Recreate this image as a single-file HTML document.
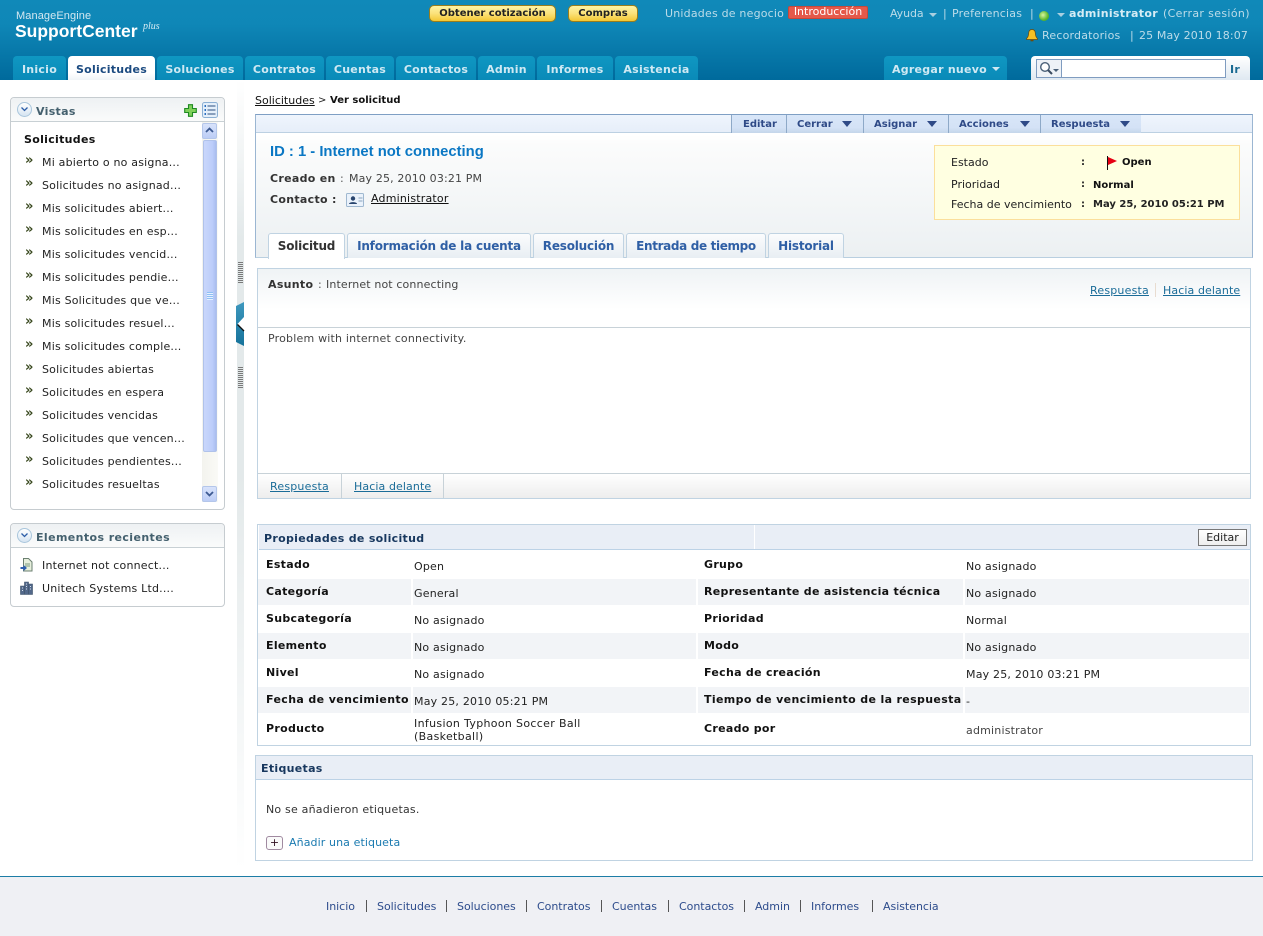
<!DOCTYPE html>
<html lang="es"><head><meta charset="utf-8"><title>SupportCenter Plus</title>
<style>
html,body{margin:0;padding:0;background:#fff;width:1263px;height:936px;overflow:hidden}
body{position:relative;font:11px/14px "DejaVu Sans","Liberation Sans",sans-serif;color:#222}
.a{position:absolute;box-sizing:border-box}
.t{position:absolute;white-space:nowrap;line-height:14px;margin-top:1px;letter-spacing:.2px}
.b{font-weight:bold;letter-spacing:.3px}
.n{letter-spacing:0}
u{text-decoration:underline}
.tab{position:absolute;top:56px;height:24px;background:linear-gradient(#0f97c2,#0a8ab8);border-radius:4px 4px 0 0;color:#cfe9f3;font-weight:bold;text-align:center;line-height:28px;white-space:nowrap;box-sizing:border-box;letter-spacing:.25px}
.tb{position:absolute;top:115px;height:18px;background:linear-gradient(#d8e6f8 0,#d4e2f6 70%,#c4d6ea 100%);border-right:1px solid #8ea9c8;color:#2f4a87;font-weight:bold;font-size:10px;line-height:19px;white-space:nowrap;box-sizing:border-box}
.tb i{position:absolute;top:6px;width:0;height:0;border-left:5px solid transparent;border-right:5px solid transparent;border-top:6px solid #2f4a87}
.st{position:absolute;top:233px;height:25px;background:linear-gradient(#fbfcfd,#e8eef3);border:1px solid #c0d3e2;border-bottom:0;border-radius:3px 3px 0 0;color:#2f5fa5;font-weight:bold;font-size:12px;line-height:24px;text-align:center;white-space:nowrap;box-sizing:border-box;letter-spacing:-.2px}
.row{position:absolute;left:258px;width:991px;height:26px;background:#f2f4f7}
.sep{position:absolute;top:550px;width:2px;height:195px;background:#fff}
.p{position:absolute;background:#fff;border:1px solid #c6ccd0;border-radius:4px;box-sizing:border-box}
.ph{position:absolute;left:0;top:0;right:0;height:24px;box-sizing:border-box;background:linear-gradient(#eef1f3,#fafbfb);border-bottom:1px solid #c8d0d4;border-radius:4px 4px 0 0}
.cir{position:absolute;left:6px;top:4px;width:15px;height:15px;border-radius:50%;background:linear-gradient(#fff,#d5e4f2);border:1px solid #a9c6dc;box-sizing:border-box}
.f{position:absolute;top:900px;height:14px;line-height:14px;color:#2d4c8c;white-space:nowrap;font-size:11px;letter-spacing:-.03px}
.fs{position:absolute;top:900px;width:1px;height:12px;background:#555}
.bt{position:absolute;top:5px;height:17px;border:1px solid #9a7d1c;border-radius:5px;background:linear-gradient(#fff3a4,#fbe27a 50%,#f4c734);color:#222;font-weight:bold;font-size:10px;line-height:15px;text-align:center;box-sizing:border-box;white-space:nowrap}
.lnk{color:#1a6c98}
.m{font-weight:bold;font-size:13px;color:#3a4a20;letter-spacing:0}
</style></head><body>

<!-- header -->
<div class="a" style="left:0;top:0;width:1263px;height:80px;background:linear-gradient(#1089b9 0,#0f87b7 30%,#006a9c 100%)"></div>
<div class="t n" style="margin:0;left:16px;top:9px;font:11px/14px 'Liberation Sans',sans-serif;letter-spacing:.1px;color:#d4e8f1">ManageEngine</div>
<div class="t n" style="margin:0;left:15px;top:21px;font:bold 17.5px/20px 'Liberation Sans',sans-serif;color:#fff">SupportCenter</div>
<div class="t n" style="margin:0;left:143px;top:21px;font:italic 10px/12px 'Liberation Serif',serif;color:#d8ecf4">plus</div>

<div class="bt" style="left:429px;width:127px">Obtener cotización</div>
<div class="bt" style="left:568px;width:70px">Compras</div>
<div class="t" style="left:665px;top:6px;color:#bcdce9">Unidades de negocio</div>
<div class="a" style="left:788px;top:6px;width:80px;height:13px;background:#e5594a;border:1px solid #c9483a;border-radius:2px;color:#fff;font-size:11px;line-height:10px;text-align:center;white-space:nowrap">Introducción</div>
<div class="t" style="left:890px;top:6px;color:#bcdce9;letter-spacing:-.1px">Ayuda</div>
<div class="a" style="left:929px;top:13px;width:0;height:0;border-left:4px solid transparent;border-right:4px solid transparent;border-top:4px solid #a9cfe0"></div>
<div class="t" style="left:943px;top:6px;color:#bcdce9">|</div>
<div class="t" style="left:952px;top:6px;color:#bcdce9">Preferencias</div>
<div class="t" style="left:1030px;top:6px;color:#bcdce9">|</div>
<div class="a" style="left:1039px;top:11px;width:10px;height:10px;border-radius:50%;background:radial-gradient(circle at 40% 40%,#d8f5a0,#5cb82c 60%,#3f9a20)"></div>
<div class="a" style="left:1057px;top:13px;width:0;height:0;border-left:4px solid transparent;border-right:4px solid transparent;border-top:4px solid #a9cfe0"></div>
<div class="t b" style="left:1069px;top:6px;color:#d6ecf5">administrator</div>
<div class="t" style="left:1163px;top:6px;color:#bcdce9;letter-spacing:.35px">(Cerrar sesión)</div>

<svg class="a" style="left:1026px;top:29px" width="12" height="13" viewBox="0 0 12 13"><path d="M6 0.5c-2.4 0-3.4 2-3.4 4.2 0 2.4-.9 3.6-2 4.8v1h10.8v-1c-1.1-1.2-2-2.4-2-4.8C9.4 2.500 8.400.5 6 .5z" fill="#f5c025" stroke="#6e4a08" stroke-width=".7"/><path d="M4.500 11h3v1.300h-3z" fill="#6e4a08"/></svg>
<div class="t" style="left:1042px;top:28px;color:#bcdce9">Recordatorios</div>
<div class="t" style="left:1130px;top:28px;color:#bcdce9">|</div>
<div class="t" style="left:1139px;top:28px;color:#bcdce9;letter-spacing:.12px">25 May 2010 18:07</div>

<div class="tab" style="left:13px;width:53px">Inicio</div>
<div class="tab" style="left:68px;width:87px;background:linear-gradient(#fff,#fff 70%,#f0f4f7);color:#1b4a80">Solicitudes</div>
<div class="tab" style="left:157px;width:86px">Soluciones</div>
<div class="tab" style="left:245px;width:79px">Contratos</div>
<div class="tab" style="left:326px;width:68px">Cuentas</div>
<div class="tab" style="left:396px;width:80px">Contactos</div>
<div class="tab" style="left:478px;width:57px">Admin</div>
<div class="tab" style="left:537px;width:76px">Informes</div>
<div class="tab" style="left:615px;width:83px">Asistencia</div>
<div class="tab" style="left:884px;width:123px;text-align:left;padding-left:8px">Agregar nuevo</div>
<div class="a" style="left:992px;top:67px;width:0;height:0;border-left:4px solid transparent;border-right:4px solid transparent;border-top:4px solid #cfe9f3"></div>

<div class="a" style="left:1031px;top:56px;width:219px;height:24px;background:linear-gradient(#fff,#dfe9f1);border-radius:4px 4px 0 0"></div>
<div class="a" style="left:1036px;top:59px;width:190px;height:19px;background:#fff;border:1px solid #7f9cc0"></div>
<div class="a" style="left:1037px;top:60px;width:24px;height:17px;background:#eef2f7"></div>
<div class="a" style="left:1061px;top:60px;width:1px;height:17px;background:#7f9cc0"></div>
<svg class="a" style="left:1039px;top:61px" width="22" height="15" viewBox="0 0 22 15"><circle cx="6" cy="6" r="4.300" fill="#fff" stroke="#4a6078" stroke-width="1.400"/><path d="M9 9l4 4" stroke="#3a4a60" stroke-width="2"/><path d="M14 8h6l-3 3z" fill="#4a6078"/></svg>
<div class="t b" style="left:1230px;top:62px;color:#1b6b93">Ir</div>

<!-- sidebar: views -->
<div class="p" style="left:10px;top:97px;width:215px;height:413px">
  <div class="ph"><div class="cir"></div>
  <svg class="a" style="left:9px;top:8px" width="9" height="7" viewBox="0 0 9 7"><path d="M1.500 1.500L4.500 4.500L7.500 1.500" fill="none" stroke="#2d5ea8" stroke-width="1.300"/></svg></div>
</div>
<div class="t b" style="left:36px;top:104px;color:#44606e">Vistas</div>
<svg class="a" style="left:184px;top:104px" width="13" height="13" viewBox="0 0 13 13"><path d="M4.500 .7h4v3.800h3.800v4H8.500v3.800h-4V8.500H.7v-4h3.800z" fill="#7fd05a" stroke="#1f8a22" stroke-width="1.100"/></svg>
<svg class="a" style="left:202px;top:102px" width="16" height="16" viewBox="0 0 16 16"><rect x=".5" y=".5" width="15" height="15" rx="2" fill="#e4effa" stroke="#8cb0d4"/><path d="M5.500 4h8M5.500 8h8M5.500 12h8" stroke="#2b4f80"/><path d="M2.500 3h1.500v2H2.500zM2.500 7h1.500v2H2.500zM2.500 11h1.500v2H2.500z" fill="#2b6fc0"/></svg>

<!-- scrollbar -->
<div class="a" style="left:202px;top:122px;width:16px;height:380px;background:linear-gradient(90deg,#f3f3ee,#fafaf6)"></div>
<div class="a" style="left:202px;top:123px;width:15px;height:16px;background:linear-gradient(#d8e3fb,#bccdf6);border:1px solid #b4c6ea;border-radius:2px"></div>
<svg class="a" style="left:205px;top:126px" width="9" height="8" viewBox="0 0 9 8"><path d="M1 6L4.500 2.500L8 6" fill="none" stroke="#3d5a92" stroke-width="1.800"/></svg>
<div class="a" style="left:203px;top:140px;width:14px;height:312px;background:linear-gradient(90deg,#c9d7fb,#bccdfa 70%,#a9bdef);border:1px solid #b0c2ea;border-radius:2px"></div>
<div class="a" style="left:207px;top:292px;width:6px;height:8px;background:repeating-linear-gradient(#8fc0f4 0,#8fc0f4 1px,#e6f0ff 1px,#e6f0ff 2px)"></div>
<div class="a" style="left:202px;top:486px;width:15px;height:16px;background:linear-gradient(#d8e3fb,#bccdf6);border:1px solid #b4c6ea;border-radius:2px"></div>
<svg class="a" style="left:205px;top:490px" width="9" height="8" viewBox="0 0 9 8"><path d="M1 2L4.500 5.500L8 2" fill="none" stroke="#3d5a92" stroke-width="1.800"/></svg>

<div class="t b" style="left:24px;top:132px;color:#111">Solicitudes</div>
<div class="t m" style="left:25px;top:153px">»</div><div class="t" style="left:42px;top:155px">Mi abierto o no asigna...</div>
<div class="t m" style="left:25px;top:176px">»</div><div class="t" style="left:42px;top:178px">Solicitudes no asignad...</div>
<div class="t m" style="left:25px;top:199px">»</div><div class="t" style="left:42px;top:201px">Mis solicitudes abiert...</div>
<div class="t m" style="left:25px;top:222px">»</div><div class="t" style="left:42px;top:224px">Mis solicitudes en esp...</div>
<div class="t m" style="left:25px;top:245px">»</div><div class="t" style="left:42px;top:247px">Mis solicitudes vencid...</div>
<div class="t m" style="left:25px;top:268px">»</div><div class="t" style="left:42px;top:270px">Mis solicitudes pendie...</div>
<div class="t m" style="left:25px;top:291px">»</div><div class="t" style="left:42px;top:293px">Mis Solicitudes que ve...</div>
<div class="t m" style="left:25px;top:314px">»</div><div class="t" style="left:42px;top:316px">Mis solicitudes resuel...</div>
<div class="t m" style="left:25px;top:337px">»</div><div class="t" style="left:42px;top:339px">Mis solicitudes comple...</div>
<div class="t m" style="left:25px;top:360px">»</div><div class="t" style="left:42px;top:362px">Solicitudes abiertas</div>
<div class="t m" style="left:25px;top:383px">»</div><div class="t" style="left:42px;top:385px">Solicitudes en espera</div>
<div class="t m" style="left:25px;top:406px">»</div><div class="t" style="left:42px;top:408px">Solicitudes vencidas</div>
<div class="t m" style="left:25px;top:429px">»</div><div class="t" style="left:42px;top:431px">Solicitudes que vencen...</div>
<div class="t m" style="left:25px;top:452px">»</div><div class="t" style="left:42px;top:454px">Solicitudes pendientes...</div>
<div class="t m" style="left:25px;top:475px">»</div><div class="t" style="left:42px;top:477px">Solicitudes resueltas</div>

<!-- sidebar: recent -->
<div class="p" style="left:10px;top:523px;width:215px;height:84px">
  <div class="ph"><div class="cir"></div>
  <svg class="a" style="left:9px;top:8px" width="9" height="7" viewBox="0 0 9 7"><path d="M1.500 1.500L4.500 4.500L7.500 1.500" fill="none" stroke="#2d5ea8" stroke-width="1.300"/></svg></div>
</div>
<div class="t b" style="left:36px;top:530px;color:#44606e;letter-spacing:.4px">Elementos recientes</div>
<svg class="a" style="left:20px;top:558px" width="13" height="14" viewBox="0 0 13 14"><path d="M3.500 .5h5l3.500 3.500v9H3.500z" fill="#e6efdc" stroke="#6b7f70"/><path d="M5 6h5M5 8h5" stroke="#7b9a80"/><path d="M.5 9h3V7l3.500 3-3.500 3v-2h-3z" fill="#2d5eb0"/></svg>
<div class="t" style="left:42px;top:558px">Internet not connect...</div>
<svg class="a" style="left:20px;top:581px" width="13" height="14" viewBox="0 0 13 14"><path d="M0.500 5h4v8.500h-4zM4.500 1h4v12.500h-4zM8.500 3h4v10.500h-4z" fill="#52688a" stroke="#3d5068" stroke-width=".6"/><path d="M6 3h1M6 5.500h1M6 8h1M2 7h1M2 9.500h1M10 5.500h1M10 8h1" stroke="#d5e0ec"/></svg>
<div class="t" style="left:42px;top:581px">Unitech Systems Ltd....</div>

<!-- splitter -->
<div class="a" style="left:237px;top:80px;width:7px;height:790px;background:linear-gradient(#fff 0,#e3e9ea 20%,#e3e9ea 50%,#fff 100%)"></div>
<div class="a" style="left:238px;top:262px;width:5px;height:22px;background:repeating-linear-gradient(#7a7a7a 0,#7a7a7a 1px,#e3e9ea 1px,#e3e9ea 2px)"></div>
<div class="a" style="left:238px;top:367px;width:5px;height:22px;background:repeating-linear-gradient(#7a7a7a 0,#7a7a7a 1px,#e3e9ea 1px,#e3e9ea 2px)"></div>
<svg class="a" style="left:236px;top:302px" width="9" height="44" viewBox="0 0 9 44"><defs><linearGradient id="hg" x1="0" y1="0" x2="0" y2="1"><stop offset="0" stop-color="#3e98be"/><stop offset="1" stop-color="#15729a"/></linearGradient></defs><path d="M0 4L4 2L8 0V44L4 42L0 40z" fill="url(#hg)"/><path d="M8 15v14L1.500 22z" fill="#fff"/><path d="M1.500 22.500L8 29" stroke="#111" stroke-width="1.300"/></svg>

<!-- breadcrumb -->
<div class="t n" style="left:255px;top:93px"><u style="color:#111">Solicitudes</u></div>
<div class="t n" style="left:318px;top:93px;font-size:10px">&gt;</div>
<div class="t b n" style="left:330px;top:93px;font-size:10px;color:#111">Ver solicitud</div>

<!-- request head box -->
<div class="a" style="left:255px;top:114px;width:998px;height:144px;border:1px solid #b9cfe0;border-top-color:#7f9fc4;border-left-color:#9bb6d2;border-right-color:#9bb6d2;background:linear-gradient(#fff 20px,#fbfcfc 30px,#ecf0f2 100%)"></div>
<div class="a" style="left:256px;top:115px;width:996px;height:18px;background:linear-gradient(#eff5fd,#e6eef9);border-bottom:1px solid #bcd0e2"></div>
<div class="tb" style="left:731px;width:56px;border-left:1px solid #8ea9c8;padding-left:11px">Editar</div>
<div class="tb" style="left:787px;width:77px;padding-left:10px">Cerrar<i style="left:55px"></i></div>
<div class="tb" style="left:864px;width:85px;padding-left:10px">Asignar<i style="left:63px"></i></div>
<div class="tb" style="left:949px;width:92px;padding-left:10px">Acciones<i style="left:71px"></i></div>
<div class="tb" style="left:1041px;width:100px;padding-left:10px;border-right:0">Respuesta<i style="left:79px"></i></div>

<div class="t n" style="margin:0;left:270px;top:144px;font:bold 14.8px/16px 'Liberation Sans',sans-serif;color:#0a77c4">ID : 1 - Internet not connecting</div>
<div class="t b" style="left:270px;top:171px;color:#333">Creado en</div>
<div class="t" style="left:340px;top:171px;color:#555">:</div>
<div class="t" style="left:349px;top:171px;color:#444;letter-spacing:.15px">May 25, 2010 03:21 PM</div>
<div class="t b" style="left:270px;top:192px;color:#333">Contacto :</div>
<svg class="a" style="left:346px;top:193px" width="19" height="14" viewBox="0 0 19 14"><rect x=".5" y=".5" width="17" height="13" rx="1" fill="#eaf2fb" stroke="#9fb8d0"/><circle cx="7" cy="5.500" r="2.200" fill="#28456e"/><path d="M3 11c0-2.500 8-2.500 8 0z" fill="#28456e"/><path d="M12.500 5h4M12.500 8h4" stroke="#8ba4bc"/></svg>
<div class="t" style="left:371px;top:191px"><u style="color:#111">Administrator</u></div>

<!-- status box -->
<div class="a" style="left:934px;top:145px;width:306px;height:75px;background:#ffffe1;border:1px solid #fbdf9b"></div>
<div class="t n" style="left:951px;top:155px">Estado</div>
<div class="t b n" style="left:1081px;top:155px;font-size:10px">:</div>
<svg class="a" style="left:1107px;top:156px" width="13" height="14" viewBox="0 0 13 14"><path d="M.5 0v14" stroke="#111"/><path d="M1 1l9 4-9 4z" fill="#e60012"/></svg>
<div class="t b n" style="left:1122px;top:155px;font-size:10px;color:#111">Open</div>
<div class="t n" style="left:951px;top:177px">Prioridad</div>
<div class="t b n" style="left:1081px;top:177px;font-size:10px">:</div>
<div class="t b n" style="left:1093px;top:178px;font-size:10px;color:#111">Normal</div>
<div class="t n" style="left:951px;top:197px">Fecha de vencimiento</div>
<div class="t b n" style="left:1081px;top:197px;font-size:10px">:</div>
<div class="t b n" style="left:1093px;top:197px;font-size:10px;color:#222">May 25, 2010 05:21 PM</div>

<!-- sub tabs -->
<div class="st" style="left:268px;width:77px;background:#fff;color:#333;height:26px">Solicitud</div>
<div class="st" style="left:347px;width:184px">Información de la cuenta</div>
<div class="st" style="left:533px;width:91px">Resolución</div>
<div class="st" style="left:626px;width:140px;letter-spacing:-.35px">Entrada de tiempo</div>
<div class="st" style="left:768px;width:76px">Historial</div>

<!-- request body -->
<div class="a" style="left:257px;top:268px;width:994px;height:231px;border:1px solid #c0d3e2;background:#fff"></div>
<div class="a" style="left:258px;top:269px;width:992px;height:58px;background:linear-gradient(#eff3f5,#fff 70%)"></div>
<div class="a" style="left:258px;top:327px;width:992px;height:1px;background:#c8d2d8"></div>
<div class="t b" style="left:268px;top:277px;color:#333">Asunto</div>
<div class="t" style="left:318px;top:277px;color:#555">:</div>
<div class="t" style="left:326px;top:277px;color:#444;letter-spacing:.13px">Internet not connecting</div>
<div class="t lnk" style="left:1090px;top:283px"><u>Respuesta</u></div>
<div class="a" style="left:1155px;top:283px;width:1px;height:14px;background:#e8dcd0"></div>
<div class="t lnk" style="left:1163px;top:283px;letter-spacing:.1px"><u>Hacia delante</u></div>
<div class="t" style="left:268px;top:331px;color:#444">Problem with internet connectivity.</div>
<div class="a" style="left:258px;top:473px;width:992px;height:25px;background:linear-gradient(#fff,#ededed);border-top:1px solid #c8d2d8"></div>
<div class="a" style="left:341px;top:474px;width:1px;height:24px;background:#c8d2d8"></div>
<div class="a" style="left:443px;top:474px;width:1px;height:24px;background:#c8d2d8"></div>
<div class="t lnk" style="left:270px;top:479px"><u>Respuesta</u></div>
<div class="t lnk" style="left:354px;top:479px;letter-spacing:.1px"><u>Hacia delante</u></div>

<!-- properties -->
<div class="a" style="left:257px;top:524px;width:994px;height:222px;border:1px solid #c0d3e2;background:#fff"></div>
<div class="a" style="left:259px;top:525px;width:991px;height:25px;background:#e9eef6;border-bottom:1px solid #bcd2e6"></div>
<div class="a" style="left:754px;top:525px;width:1px;height:24px;background:#fff"></div>
<div class="t b" style="left:264px;top:531px;color:#17375e">Propiedades de solicitud</div>
<div class="a" style="left:1198px;top:529px;width:49px;height:17px;background:linear-gradient(#fff,#eee);border:1px solid #777;text-align:center;line-height:15px;color:#222">Editar</div>

<div class="row" style="top:579px"></div><div class="row" style="top:633px"></div><div class="row" style="top:687px"></div>
<div class="sep" style="left:411px"></div><div class="sep" style="left:696px"></div><div class="sep" style="left:963px"></div>

<div class="t b" style="left:266px;top:557px;color:#111">Estado</div><div class="t" style="left:414px;top:559px">Open</div>
<div class="t b" style="left:704px;top:557px;color:#111">Grupo</div><div class="t" style="left:966px;top:559px">No asignado</div>
<div class="t b" style="left:266px;top:584px;color:#111">Categoría</div><div class="t" style="left:414px;top:586px">General</div>
<div class="t b" style="left:704px;top:584px;color:#111">Representante de asistencia técnica</div><div class="t" style="left:966px;top:586px">No asignado</div>
<div class="t b" style="left:266px;top:611px;color:#111">Subcategoría</div><div class="t" style="left:414px;top:613px">No asignado</div>
<div class="t b" style="left:704px;top:611px;color:#111">Prioridad</div><div class="t" style="left:966px;top:613px">Normal</div>
<div class="t b" style="left:266px;top:638px;color:#111">Elemento</div><div class="t" style="left:414px;top:640px">No asignado</div>
<div class="t b" style="left:704px;top:638px;color:#111">Modo</div><div class="t" style="left:966px;top:640px">No asignado</div>
<div class="t b" style="left:266px;top:665px;color:#111">Nivel</div><div class="t" style="left:414px;top:667px">No asignado</div>
<div class="t b" style="left:704px;top:665px;color:#111">Fecha de creación</div><div class="t" style="left:966px;top:667px">May 25, 2010 03:21 PM</div>
<div class="t b" style="left:266px;top:692px;color:#111;letter-spacing:.38px">Fecha de vencimiento</div><div class="t" style="left:414px;top:694px">May 25, 2010 05:21 PM</div>
<div class="t b" style="left:704px;top:692px;color:#111;letter-spacing:.35px">Tiempo de vencimiento de la respuesta</div><div class="t" style="left:966px;top:694px">-</div>
<div class="t b" style="left:266px;top:721px;color:#111">Producto</div>
<div class="t" style="left:414px;top:716px;line-height:13px;letter-spacing:.33px">Infusion Typhoon Soccer Ball<br>(Basketball)</div>
<div class="t b" style="left:704px;top:721px;color:#111">Creado por</div><div class="t" style="left:966px;top:723px;color:#444">administrator</div>

<!-- tags -->
<div class="a" style="left:255px;top:755px;width:998px;height:106px;border:1px solid #c0d3e2;background:#fff"></div>
<div class="a" style="left:256px;top:756px;width:996px;height:24px;background:#e9eef6;border-bottom:1px solid #bcd2e6"></div>
<div class="t b" style="left:261px;top:761px;color:#17375e">Etiquetas</div>
<div class="t" style="left:266px;top:802px;color:#333">No se añadieron etiquetas.</div>
<div class="a" style="left:266px;top:836px;width:17px;height:14px;border:1px solid #a08aa0;border-radius:3px;background:#fafafa;text-align:center;line-height:12px;font-size:11px;color:#301020">+</div>
<div class="t" style="left:289px;top:835px;color:#1a7ab0;letter-spacing:.1px">Añadir una etiqueta</div>

<!-- footer -->
<div class="a" style="left:0;top:876px;width:1263px;height:60px;background:#eff0f4;border-top:1px solid #1c7da6"></div>
<div class="f" style="left:326px">Inicio</div><div class="fs" style="left:366px"></div>
<div class="f" style="left:377px">Solicitudes</div><div class="fs" style="left:446px"></div>
<div class="f" style="left:457px">Soluciones</div><div class="fs" style="left:526px"></div>
<div class="f" style="left:537px">Contratos</div><div class="fs" style="left:601px"></div>
<div class="f" style="left:612px">Cuentas</div><div class="fs" style="left:668px"></div>
<div class="f" style="left:679px">Contactos</div><div class="fs" style="left:744px"></div>
<div class="f" style="left:755px">Admin</div><div class="fs" style="left:800px"></div>
<div class="f" style="left:811px">Informes</div><div class="fs" style="left:872px"></div>
<div class="f" style="left:883px">Asistencia</div>
</body></html>
